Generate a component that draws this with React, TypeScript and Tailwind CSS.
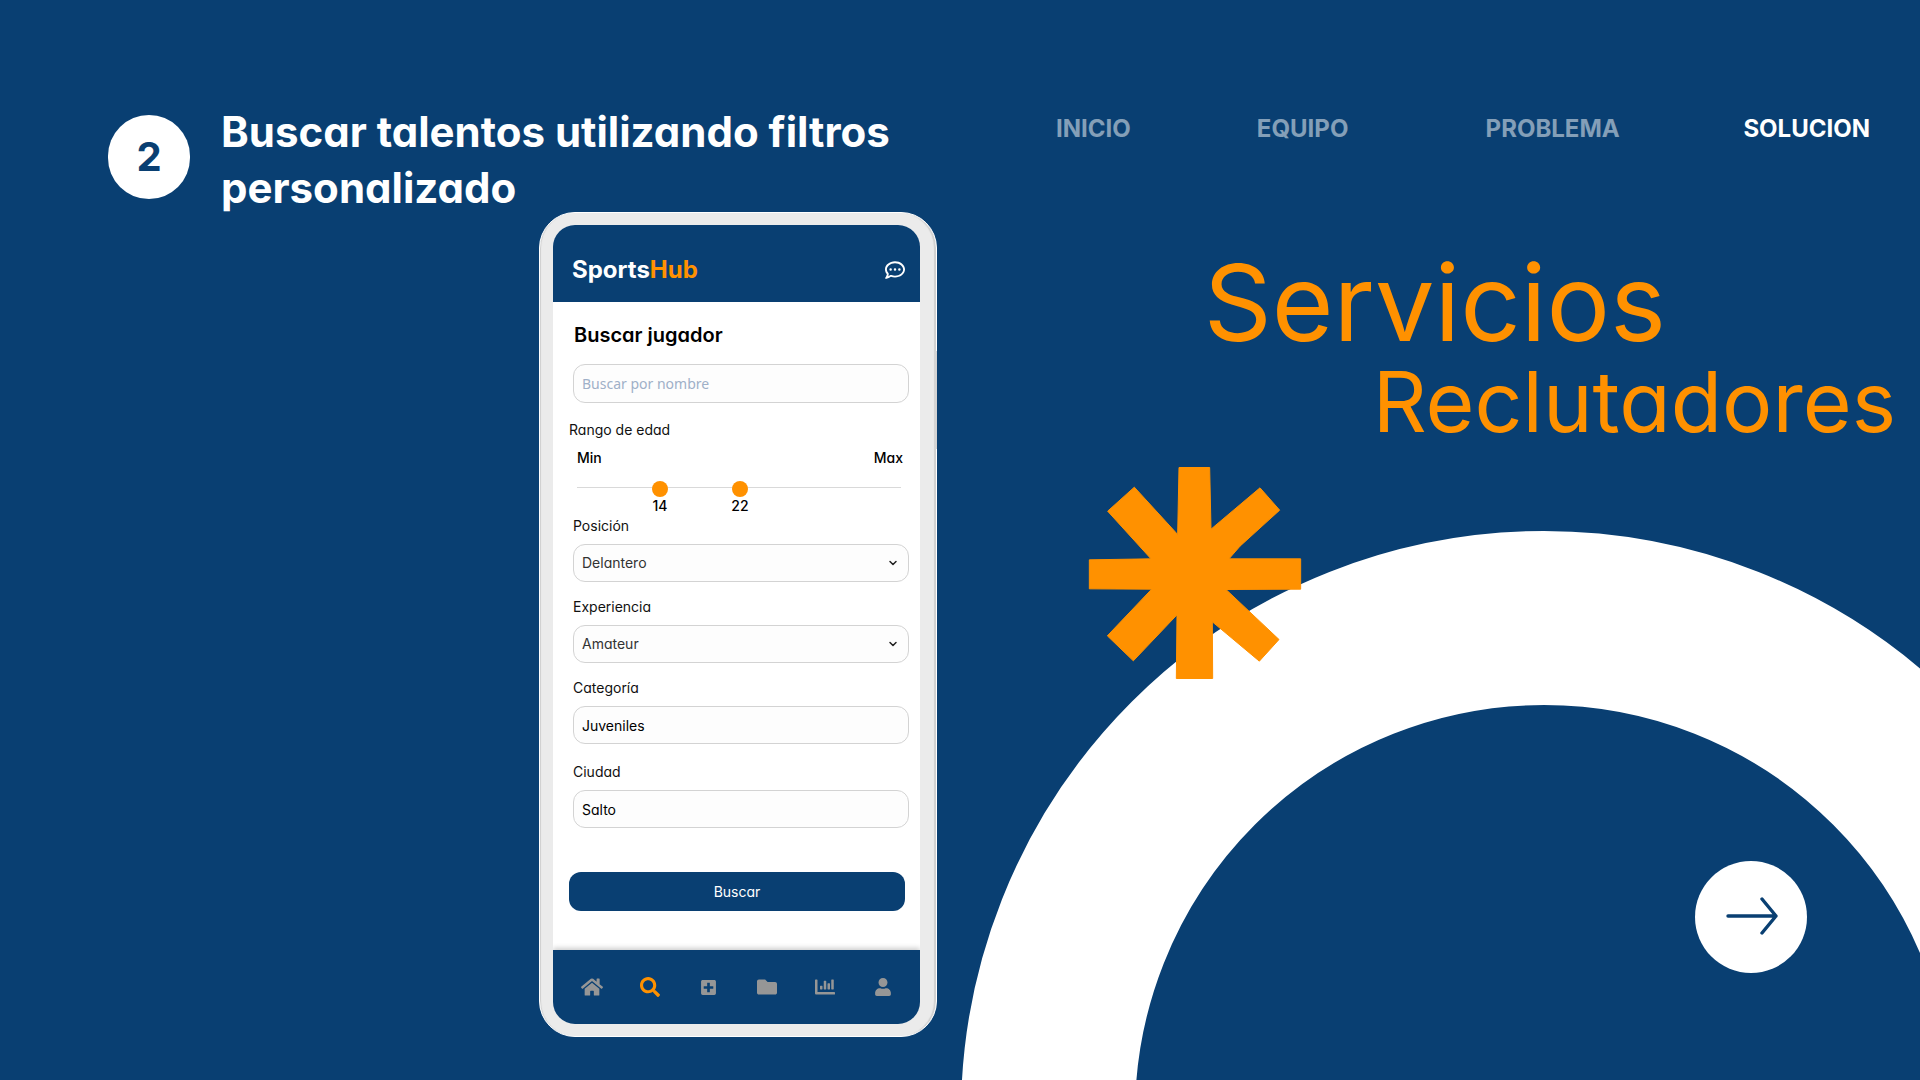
import { useState } from "react";
import type { ReactNode } from "react";
import {
  FaChartBar,
  FaFolder,
  FaHome,
  FaPlusSquare,
  FaSearch,
  FaUser,
} from "react-icons/fa";
import { FaRegCommentDots } from "react-icons/fa6";
import { ChevronDown } from "lucide-react";

const links = ["INICIO", "EQUIPO", "PROBLEMA", "SOLUCION"];

const tabs = [
  { label: "Inicio", icon: <FaHome className="size-[22px]" /> },
  { label: "Buscar", icon: <FaSearch className="size-5" /> },
  { label: "Agregar", icon: <FaPlusSquare className="size-[17px]" /> },
  { label: "Carpetas", icon: <FaFolder className="size-5" /> },
  { label: "Estadísticas", icon: <FaChartBar className="size-5" /> },
  { label: "Perfil", icon: <FaUser className="size-[18px]" /> },
];

const fieldBox =
  "w-full rounded-xl border border-[#d3d3d3] bg-[#fdfdfd] px-2 text-sm outline-none";

function Field({ id, label, children }: { id: string; label: string; children: ReactNode }) {
  return (
    <div className="flex flex-col gap-2">
      <label htmlFor={id} className="text-sm leading-5 text-[#111]">
        {label}
      </label>
      {children}
    </div>
  );
}

function SelectField({ id, label, options }: { id: string; label: string; options: string[] }) {
  return (
    <Field id={id} label={label}>
      <div className="relative">
        <select id={id} className={`${fieldBox} block h-[38px] appearance-none text-[#333]`}>
          {options.map((option) => (
            <option key={option}>{option}</option>
          ))}
        </select>
        <ChevronDown
          className="pointer-events-none absolute top-[13px] right-2.5 size-3 text-[#222]"
          strokeWidth={3}
        />
      </div>
    </Field>
  );
}

const AGE_MIN = 6.5;
const AGE_MAX = 37.3;

function AgeSlider() {
  const [ages, setAges] = useState([14, 22]);
  return (
    <div className="relative h-[35px]">
      <div className="absolute inset-x-0 top-1.5 h-px bg-[#d9d9d9]" />
      {ages.map((age, i) => (
        <div key={i}>
          <input
            type="range"
            aria-label={i === 0 ? "Edad mínima" : "Edad máxima"}
            min={AGE_MIN}
            max={AGE_MAX}
            step="any"
            value={age}
            onChange={(e) => {
              const next = [...ages];
              next[i] = Math.round(Number(e.target.value));
              setAges(next);
            }}
            className="pointer-events-none absolute inset-x-0 top-0 h-4 w-full appearance-none bg-transparent [&::-webkit-slider-thumb]:pointer-events-auto [&::-webkit-slider-thumb]:size-4 [&::-webkit-slider-thumb]:appearance-none [&::-webkit-slider-thumb]:rounded-full [&::-webkit-slider-thumb]:bg-[#ff9100]"
          />
          <div className="pointer-events-none absolute inset-x-2 top-[15px]">
            <span
              className="absolute -translate-x-1/2 text-sm leading-5 font-medium"
              style={{ left: `${((age - AGE_MIN) / (AGE_MAX - AGE_MIN)) * 100}%` }}
            >
              {age}
            </span>
          </div>
        </div>
      ))}
    </div>
  );
}

function Phone() {
  return (
    <div className="relative w-[398px] rounded-[36px] border border-white bg-[#ebebeb] py-3 pr-4 pl-[13px] shadow-[inset_-3px_0_1px_-1px_#d0d0d0,inset_2px_0_1px_-1px_#cfcfcf]">
      <div className="absolute top-[138px] -right-px h-[98px] w-[3px] bg-[#d4d4d4]" />
      <div className="flex h-[799px] flex-col overflow-hidden rounded-[22px] bg-white text-black">
        <header className="flex h-[77px] items-center justify-between bg-[#093f72] pt-3 pr-[15px] pl-[19px]">
          <div className="text-2xl font-bold text-white">
            Sports<span className="text-[#ff9100]">Hub</span>
          </div>
          <button type="button" aria-label="Mensajes" className="text-white">
            <FaRegCommentDots className="size-5" />
          </button>
        </header>

        <form className="flex flex-col pt-[19px] pr-[15px] pl-4" onSubmit={(e) => e.preventDefault()}>
          <h2 className="pl-[5px] text-xl leading-7 font-semibold">Buscar jugador</h2>
          <div className="mt-[15px] -mr-1 pl-1">
            <input
              type="text"
              aria-label="Buscar por nombre"
              placeholder="Buscar por nombre"
              className={`${fieldBox} block h-[39px] font-['Noto_Sans',sans-serif] placeholder:text-[#9fb0c8]`}
            />
          </div>

          <div className="mt-[17px] text-sm leading-5 text-[#111]">Rango de edad</div>
          <div className="mt-2 flex justify-between pr-0.5 pl-2 text-sm leading-5 font-medium">
            <span>Min</span>
            <span>Max</span>
          </div>
          <div className="mt-[13px] pr-1 pl-2">
            <AgeSlider />
          </div>

          <div className="-mr-1 flex flex-col gap-[15px] pl-1">
            <SelectField
              id="posicion"
              label="Posición"
              options={["Delantero", "Mediocampista", "Defensa", "Arquero"]}
            />
            <SelectField id="experiencia" label="Experiencia" options={["Amateur", "Profesional"]} />
            <Field id="categoria" label="Categoría">
              <input id="categoria" defaultValue="Juveniles" className={`${fieldBox} h-[38px] text-black`} />
            </Field>
            <div className="pt-[3px]">
              <Field id="ciudad" label="Ciudad">
                <input id="ciudad" defaultValue="Salto" className={`${fieldBox} h-[38px] text-black`} />
              </Field>
            </div>
          </div>

          <button type="submit" className="mt-11 h-[39px] rounded-xl bg-[#093f72] text-sm text-white">
            Buscar
          </button>
        </form>

        <nav className="mt-auto flex h-[74px] items-center bg-[#093f72] pr-2 pl-2.5 shadow-[0_-2px_5px_rgba(0,0,0,0.2)]">
          {tabs.map((tab) => (
            <button
              key={tab.label}
              type="button"
              aria-label={tab.label}
              className={`flex flex-1 justify-center ${
                tab.label === "Buscar" ? "text-[#ff9100]" : "text-[#969696]"
              }`}
            >
              {tab.icon}
            </button>
          ))}
        </nav>
      </div>
    </div>
  );
}

export default function App() {
  return (
    <main className="relative min-h-screen overflow-hidden bg-[#093f72] font-['Inter',sans-serif] text-white [font-feature-settings:'cv11']">
      <div className="absolute -right-[207px] top-[531px] size-[1166px] rounded-full border-[174px] border-white" />
      <svg
        className="absolute top-[467px] right-[619px] size-[212px] overflow-visible"
        viewBox="57 53 636 635"
        fill="#ff9100"
        stroke="#ff9100"
        strokeWidth="3"
        strokeLinejoin="round"
        aria-hidden="true"
      >
        <path d="M327 54L419 54L423 239L570 115L629 182L510 290L477 328L692 328L692 419L468 420L627 570L568 635L427 517L428 687L319 687L321 496L190 634L112 559L245 419L58 418L58 331L243 328L113 185L193 113L323 255Z" />
      </svg>

      <div className="relative grid grid-cols-2">
        <section className="flex flex-col pt-[104px] pr-[23px] pb-11">
          <div className="flex items-start gap-[31px] pl-[108px]">
            <div className="mt-[11px] flex h-[84px] w-[82px] shrink-0 items-center justify-center rounded-full bg-white text-[40px] font-bold text-[#093f72]">
              2
            </div>
            <h1 className="text-[42px] leading-14 font-bold">
              Buscar talentos utilizando filtros
              <br />
              personalizado
            </h1>
          </div>
          <div className="-mt-1 self-end">
            <Phone />
          </div>
        </section>

        <section className="pt-[113px]">
          <nav className="grid grid-cols-[201fr_229fr_258fr_126fr] pr-[50px] pl-24 text-2xl leading-8 font-bold">
            {links.map((link) => (
              <a
                key={link}
                href="#"
                className={link === "SOLUCION" ? "text-white" : "text-white/50"}
              >
                {link}
              </a>
            ))}
          </nav>
          <div className="mt-[99px] flex flex-col text-[#ff9100]">
            <p className="self-end pr-[254px] text-[106px] leading-[118px]">Servicios</p>
            <p className="self-end pr-6 text-[84px] leading-[80px]">Reclutadores</p>
          </div>
        </section>
      </div>

      <button
        type="button"
        aria-label="Siguiente"
        className="absolute top-[861px] right-[113px] flex size-28 items-center justify-center rounded-full bg-white text-[#093f72]"
      >
        <svg
          className="mb-0.5 ml-0.5 h-[38px] w-[52px]"
          viewBox="0 0 52 38"
          fill="none"
          stroke="currentColor"
          strokeWidth="3.4"
          strokeLinecap="round"
          strokeLinejoin="round"
        >
          <path d="M2 19H50M36 2L50 19L36 36" />
        </svg>
      </button>
    </main>
  );
}
